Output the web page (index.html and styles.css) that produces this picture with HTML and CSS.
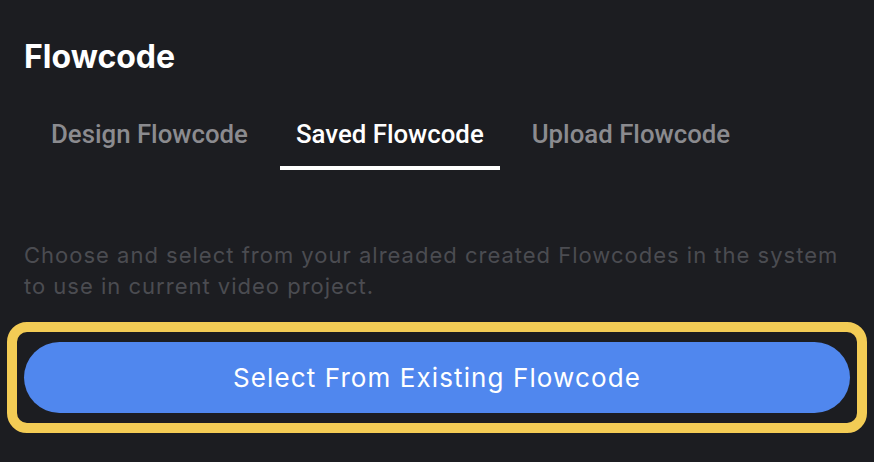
FILE: index.html
```html
<!DOCTYPE html>
<html lang="en">
<head>
	<meta charset="UTF-8">
	<title>Flowcode</title>
	<link rel="stylesheet" href="styles.css">
</head>
<body>
	<div class="panel">
		<h2 class="title">Flowcode</h2>
		<ul class="tabs">
			<li class="tab">Design Flowcode</li>
			<li class="tab active">Saved Flowcode</li>
			<li class="tab">Upload Flowcode</li>
		</ul>
		<p class="desc">Choose and select from your alreaded created Flowcodes in the system to use in current video project.</p>
		<div class="focus">
			<button class="btn">Select From Existing Flowcode</button>
		</div>
	</div>
</body>
</html>
```

FILE: styles.css
```css
* {
	margin: 0;
	padding: 0;
	box-sizing: border-box;
}
html, body {
	background: #1c1d21;
}
.panel {
	padding-top: 38px;
}
.title {
	margin: 0 24px 43px;
	font-family: Inter, "Liberation Sans", sans-serif;
	font-weight: 700;
	font-size: 32px;
	line-height: 38px;
	color: #fff;
}
.tabs {
	display: flex;
	gap: 16px;
	padding-left: 35px;
	list-style: none;
}
.tab {
	padding: 0 16px 17px;
	border-bottom: 4px solid transparent;
	font-family: Roboto, "Liberation Sans", sans-serif;
	font-weight: 500;
	font-size: 25.8px;
	line-height: 30px;
	color: #8b8b8f;
}
.tab.active {
	color: #fff;
	border-bottom-color: #fff;
}
.desc {
	margin: 70px 24px 20px;
	font-family: Inter, "Liberation Sans", sans-serif;
	font-size: 22px;
	line-height: 31px;
	letter-spacing: 1px;
	color: #4b4c51;
}
.focus {
	margin: 0 7px;
	padding: 10px 7px;
	border: 10px solid #f3cc55;
	border-radius: 20px;
}
.btn {
	display: block;
	width: 100%;
	height: 71px;
	border: none;
	border-radius: 36px;
	background: #5087ee;
	color: #fff;
	font-family: Inter, "Liberation Sans", sans-serif;
	font-size: 26px;
	letter-spacing: 1.1px;
}
```
